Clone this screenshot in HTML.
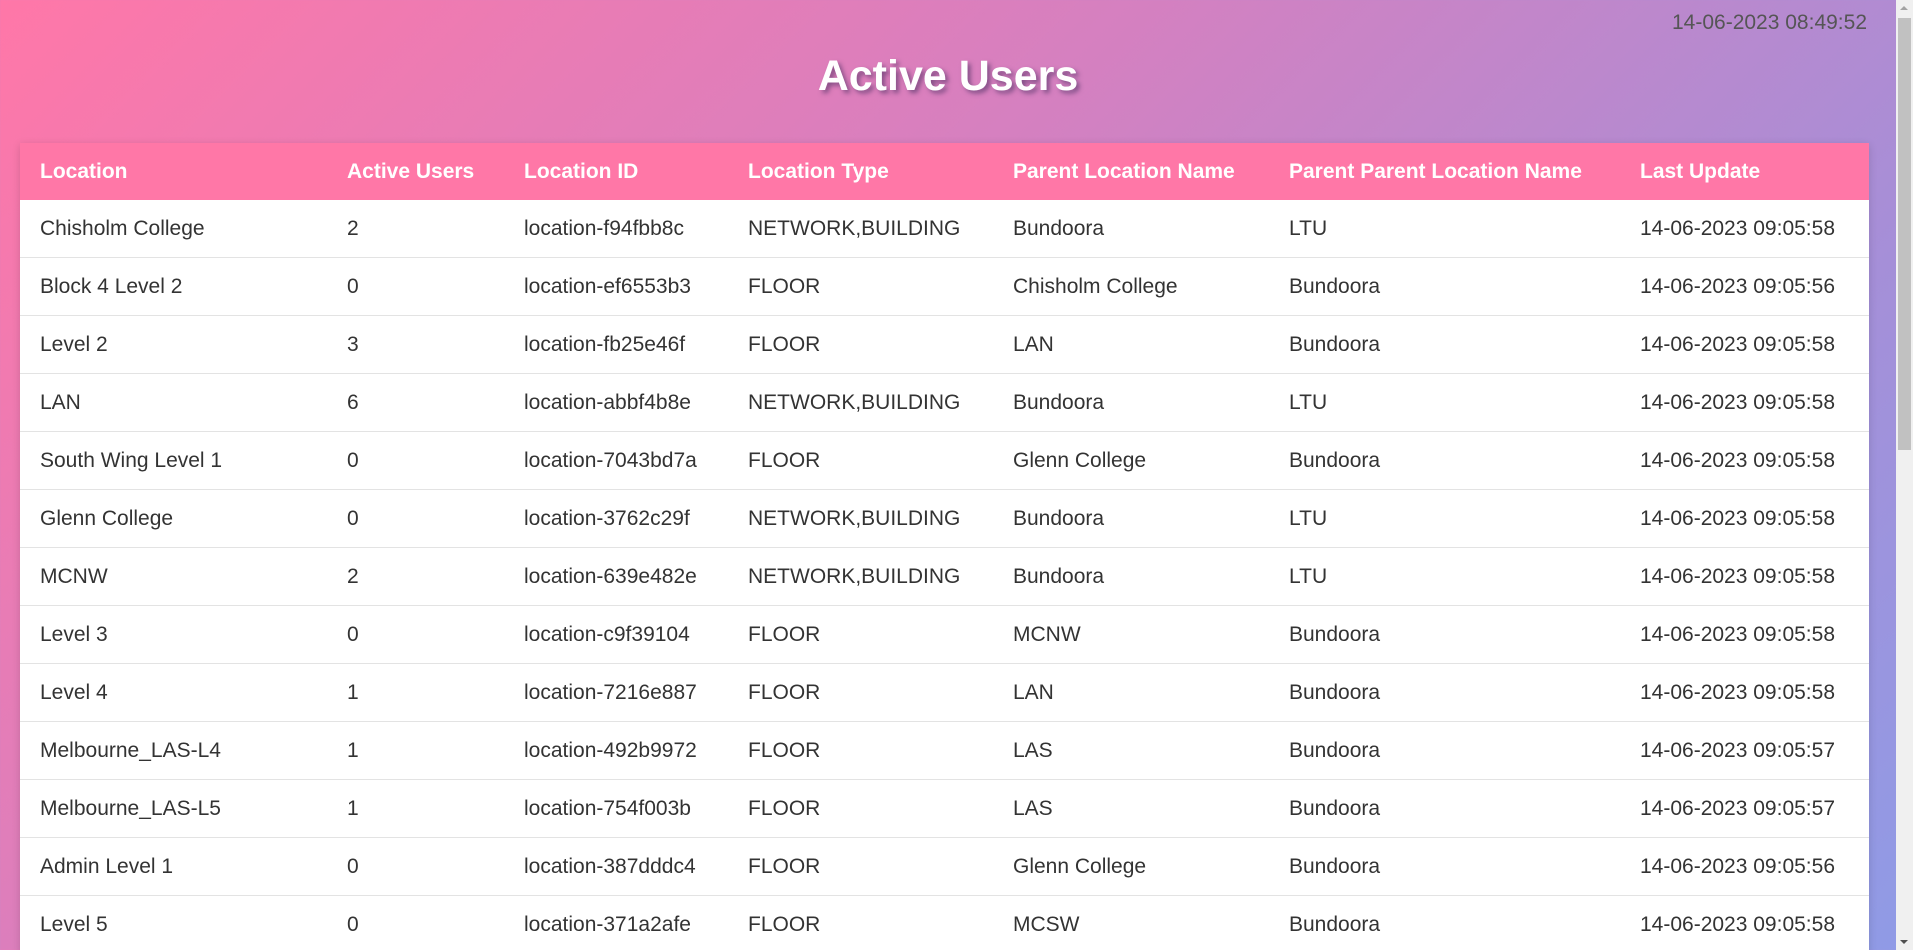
<!DOCTYPE html>
<html><head><meta charset="utf-8"><style>
html,body{margin:0;padding:0;width:1913px;height:950px;overflow:hidden;}
body{font-family:"Liberation Sans",Arial,sans-serif;background:linear-gradient(135deg,#ff77a8 0%,#d580c0 40%,#a58fd8 75%,#8f9be6 100%);position:relative;}
.ts{position:absolute;right:46px;top:11px;font-size:21px;color:#555;}
h1{position:absolute;left:0;width:1896px;top:52px;margin:0;text-align:center;color:#fff;font-size:43px;font-weight:bold;text-shadow:3px 3px 5px rgba(60,40,90,.55);}
table{position:absolute;left:20px;top:143px;width:1849px;border-collapse:collapse;table-layout:fixed;background:#fff;box-shadow:0 2px 8px rgba(0,0,0,.15);}
th{background:#ff77a7;color:#fff;font-weight:bold;font-size:21px;text-align:left;height:57px;padding:0 0 0 20px;white-space:nowrap;}
td{font-size:21px;color:#333;height:57px;padding:0 0 0 20px;border-bottom:1px solid #e3e3e3;white-space:nowrap;}
.sb{position:absolute;right:0;top:0;width:17px;height:950px;background:#f0f0f0;}
.th{position:absolute;left:2px;width:13px;top:18px;height:432px;background:#c1c1c1;}
.au{position:absolute;left:4px;top:6px;width:0;height:0;border-left:4px solid transparent;border-right:4px solid transparent;border-bottom:4px solid #a3a3a3;}
.ad{position:absolute;left:4px;bottom:6px;width:0;height:0;border-left:4px solid transparent;border-right:4px solid transparent;border-top:4px solid #505050;}
</style></head><body>
<div class="ts">14-06-2023 08:49:52</div>
<h1>Active Users</h1>
<table>
<colgroup><col style="width:307px"><col style="width:177px"><col style="width:224px"><col style="width:265px"><col style="width:276px"><col style="width:351px"><col style="width:249px"></colgroup>
<tr><th>Location</th><th>Active Users</th><th>Location ID</th><th>Location Type</th><th>Parent Location Name</th><th>Parent Parent Location Name</th><th>Last Update</th></tr>
<tr><td>Chisholm College</td><td>2</td><td>location-f94fbb8c</td><td>NETWORK,BUILDING</td><td>Bundoora</td><td>LTU</td><td>14-06-2023 09:05:58</td></tr>
<tr><td>Block 4 Level 2</td><td>0</td><td>location-ef6553b3</td><td>FLOOR</td><td>Chisholm College</td><td>Bundoora</td><td>14-06-2023 09:05:56</td></tr>
<tr><td>Level 2</td><td>3</td><td>location-fb25e46f</td><td>FLOOR</td><td>LAN</td><td>Bundoora</td><td>14-06-2023 09:05:58</td></tr>
<tr><td>LAN</td><td>6</td><td>location-abbf4b8e</td><td>NETWORK,BUILDING</td><td>Bundoora</td><td>LTU</td><td>14-06-2023 09:05:58</td></tr>
<tr><td>South Wing Level 1</td><td>0</td><td>location-7043bd7a</td><td>FLOOR</td><td>Glenn College</td><td>Bundoora</td><td>14-06-2023 09:05:58</td></tr>
<tr><td>Glenn College</td><td>0</td><td>location-3762c29f</td><td>NETWORK,BUILDING</td><td>Bundoora</td><td>LTU</td><td>14-06-2023 09:05:58</td></tr>
<tr><td>MCNW</td><td>2</td><td>location-639e482e</td><td>NETWORK,BUILDING</td><td>Bundoora</td><td>LTU</td><td>14-06-2023 09:05:58</td></tr>
<tr><td>Level 3</td><td>0</td><td>location-c9f39104</td><td>FLOOR</td><td>MCNW</td><td>Bundoora</td><td>14-06-2023 09:05:58</td></tr>
<tr><td>Level 4</td><td>1</td><td>location-7216e887</td><td>FLOOR</td><td>LAN</td><td>Bundoora</td><td>14-06-2023 09:05:58</td></tr>
<tr><td>Melbourne_LAS-L4</td><td>1</td><td>location-492b9972</td><td>FLOOR</td><td>LAS</td><td>Bundoora</td><td>14-06-2023 09:05:57</td></tr>
<tr><td>Melbourne_LAS-L5</td><td>1</td><td>location-754f003b</td><td>FLOOR</td><td>LAS</td><td>Bundoora</td><td>14-06-2023 09:05:57</td></tr>
<tr><td>Admin Level 1</td><td>0</td><td>location-387dddc4</td><td>FLOOR</td><td>Glenn College</td><td>Bundoora</td><td>14-06-2023 09:05:56</td></tr>
<tr><td>Level 5</td><td>0</td><td>location-371a2afe</td><td>FLOOR</td><td>MCSW</td><td>Bundoora</td><td>14-06-2023 09:05:58</td></tr>
</table>
<div class="sb"><div class="au"></div><div class="th"></div><div class="ad"></div></div>
</body></html>
